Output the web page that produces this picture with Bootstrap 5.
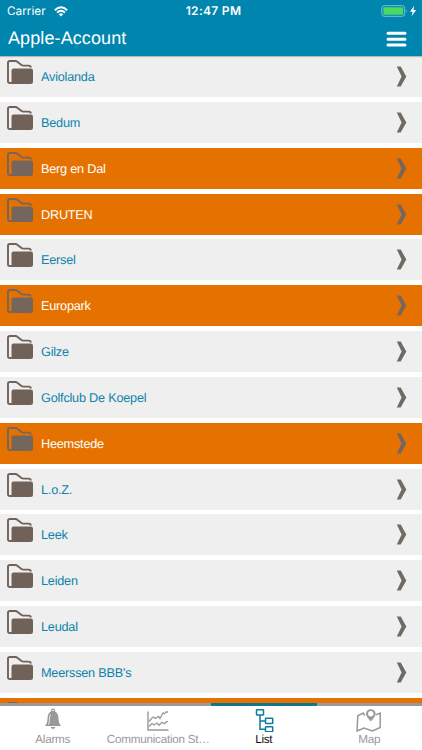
<!DOCTYPE html>
<html lang="en">
<head>
<meta charset="utf-8">
<meta name="viewport" content="width=device-width, initial-scale=1">
<title>Apple-Account</title>
<link href="https://cdn.jsdelivr.net/npm/bootstrap@5.3.0/dist/css/bootstrap.min.css" rel="stylesheet">
<style>
body{font-family:"Liberation Sans",Arial,sans-serif;background:#fff;height:750px;text-rendering:geometricPrecision}
svg{display:block;flex:none}
.top-bar{background:#0085ae;height:56px;box-shadow:0 1px 1px #b4bcc0;z-index:2}
.status{font-family:Inter,sans-serif;font-size:12px;height:22px;padding:0 5px 0 7px;line-height:22px}
.clock{letter-spacing:.3px;font-weight:600;padding-left:3px}
.carrier{font-size:11.8px}
.app-title{font-size:18px;line-height:32px;letter-spacing:.1px}
.title-row{height:34px;padding:0 15px 0 8px}
.sites{height:647px}
.site{height:41px;margin-bottom:4.85px;background:#efefef;color:#0e83ab;font-size:12.7px;padding:0 15px 0 7px;flex:none}
.site.alarm{background:#e57200;color:#fff}
.site .name{margin-left:8px;line-height:42px;letter-spacing:-.22px}
.folder{margin-top:4px;color:#706259}
.alarm .folder,.alarm .chev{color:#75665d}
.chev{margin-top:10px;color:#706a64}
.tabs{height:47px;background:#fff}
.tab{width:105.5px;border-top:3px solid #999;color:#999;font-size:11.7px;letter-spacing:-.25px}
.tab.active{border-color:#0e7695;color:#0e7c9f}
.tab .cap{line-height:14px;margin-top:1px}
.tab.active .cap{color:#111}
</style>
<script src="https://cdn.jsdelivr.net/npm/bootstrap@5.3.0/dist/js/bootstrap.bundle.min.js"></script>
</head>
<body class="d-flex flex-column overflow-hidden">
<svg width="0" height="0" class="position-absolute">
<symbol id="folder" viewBox="0 0 26 24"><path d="M4.500 23H2.800Q1 23 1 21.200V2.800Q1 1 2.800 1H8.500q1 0 1.800.7l4.200 3.300q.8.600 1.800.6h5.200q2.300 0 2.300 1.900" fill="none" stroke="currentColor" stroke-width="1.900"/><path d="M6.500 8.500h17.300q2.200 0 2.200 2.200v10.800q0 2.500-2.500 2.500H3.200q1.300-.4 1.300-2.400V10.700Q4.500 8.500 6.500 8.500z" fill="currentColor"/></symbol>
<symbol id="chev" viewBox="0 0 11 21"><path d="M.8.500h3.900L10.300 10.500 4.700 20.500H.8L5.600 10.500z" fill="currentColor"/></symbol>
</svg>
<header class="top-bar position-relative text-white flex-shrink-0">
  <div class="status row g-0 align-items-center">
    <div class="col d-flex align-items-center gap-1"><span class="carrier">Carrier</span>
      <svg class="ms-1" width="15" height="11" viewBox="0 0 15 11" fill="none" stroke="#fff" stroke-width="1.9"><path d="M.8 4.200Q7-1.800 13.200 4.200M3 6.600q4-3.700 8 0"/><path d="M7 10.500 4.700 8.200q2.300-1.900 4.600 0z" fill="#fff" stroke="none"/></svg>
    </div>
    <div class="col-auto clock">12:47 PM</div>
    <div class="col d-flex justify-content-end">
      <svg width="36" height="12" viewBox="0 0 36 12"><rect x=".9" y=".7" width="22.800" height="10.600" rx="2.500" fill="none" stroke="#7fc0d5"/><rect x="2.400" y="2.200" width="19.800" height="7.600" rx="1" fill="#4bd964"/><path d="M25 4.200q1.600 1.800 0 3.600z" fill="#7fc0d5"/><path d="M33.200.8 29 6.800h2.700l-1.200 4.600 4.600-6.300h-2.700z" fill="#fff"/></svg>
    </div>
  </div>
  <div class="title-row d-flex justify-content-between">
    <div class="app-title">Apple-Account</div>
    <svg class="mt-2" width="21" height="18" viewBox="0 0 21 18" stroke="#fff" stroke-width="3" stroke-linecap="round"><path d="M2 3.300h17M2 9.200h17M2 15h17"/></svg>
  </div>
</header>
<main class="sites d-flex flex-column overflow-hidden flex-shrink-0" id="sites"></main>
<nav class="tabs d-flex flex-shrink-0">
  <div class="tab d-flex flex-column align-items-center">
    <svg width="28" height="26" viewBox="0 0 28 26"><path d="M13.500 5q-5 .8-5 8 0 4.500-2.500 7h16q-2.500-2.500-2.500-7 0-7.200-5-8z" fill="#999"/><circle cx="14" cy="4.700" r="1.500" fill="none" stroke="#999" stroke-width="1.200"/><path d="M11.500 8.500q-1.300 2-1 6-.2 2.200-1 4" fill="none" stroke="#fff" stroke-width=".8"/><path d="M11.500 21h5q-1 2-2.500 2t-2.500-2z" fill="#999"/></svg>
    <div class="cap">Alarms</div>
  </div>
  <div class="tab d-flex flex-column align-items-center">
    <svg width="28" height="26" viewBox="0 0 28 26" fill="none" stroke="#999"><path d="M4 5.500v18.500h20.500" stroke-width="1.400"/><path d="m5 15.500 3-3.500 1.500-1 2 1.500 3-2 1.500 2L19 7l1.500.8L22 6h2M5 20.500l3-3 2 1.500 3-2 2 2.300 3-3 2.500 1.400 2-2H24" stroke-width="1.300"/></svg>
    <div class="cap text-nowrap">Communication St…</div>
  </div>
  <div class="tab active d-flex flex-column align-items-center">
    <svg width="28" height="26" viewBox="0 0 28 26" fill="none" stroke="currentColor" stroke-width="1.500"><rect x="6.500" y="3.700" width="7" height="5.300" rx=".6"/><rect x="15.500" y="12.200" width="7.200" height="5.300" rx=".6"/><rect x="15.500" y="20.700" width="7.200" height="5" rx=".6"/><path d="M10 9v14.300h5.500M10 14.900h5.500"/></svg>
    <div class="cap">List</div>
  </div>
  <div class="tab d-flex flex-column align-items-center">
    <svg width="28" height="26" viewBox="0 0 28 26" fill="none" stroke="#999" stroke-width="1.500"><path d="M9.800 9.500 8.300 7 2.800 9.800 2 25l7-3 8.500 3 7.700-3.500V7.200l-4.500 1.700"/><path d="M15.800 15.500q-4.800-5.200-4.800-7.500a4.800 4.800 0 0 1 9.600 0q0 2.300-4.800 7.500z" fill="#999" stroke="none"/><circle cx="15.800" cy="7.800" r="2.700" fill="#fff" stroke="none"/></svg>
    <div class="cap">Map</div>
  </div>
</nav>
<script>
const sites=[["Aviolanda"],["Bedum"],["Berg en Dal",1],["DRUTEN",1],["Eersel"],["Europark",1],["Gilze"],["Golfclub De Koepel"],["Heemstede",1],["L.o.Z."],["Leek"],["Leiden"],["Leudal"],["Meerssen BBB's"],["",1]];
document.getElementById("sites").innerHTML=sites.map(([n,a])=>`<div class="site d-flex ${a?"alarm":""}"><svg class="folder" width="26" height="24"><use href="#folder"/></svg><span class="name flex-grow-1">${n}</span><svg class="chev" width="11" height="21"><use href="#chev"/></svg></div>`).join("");
</script>
</body>
</html>
